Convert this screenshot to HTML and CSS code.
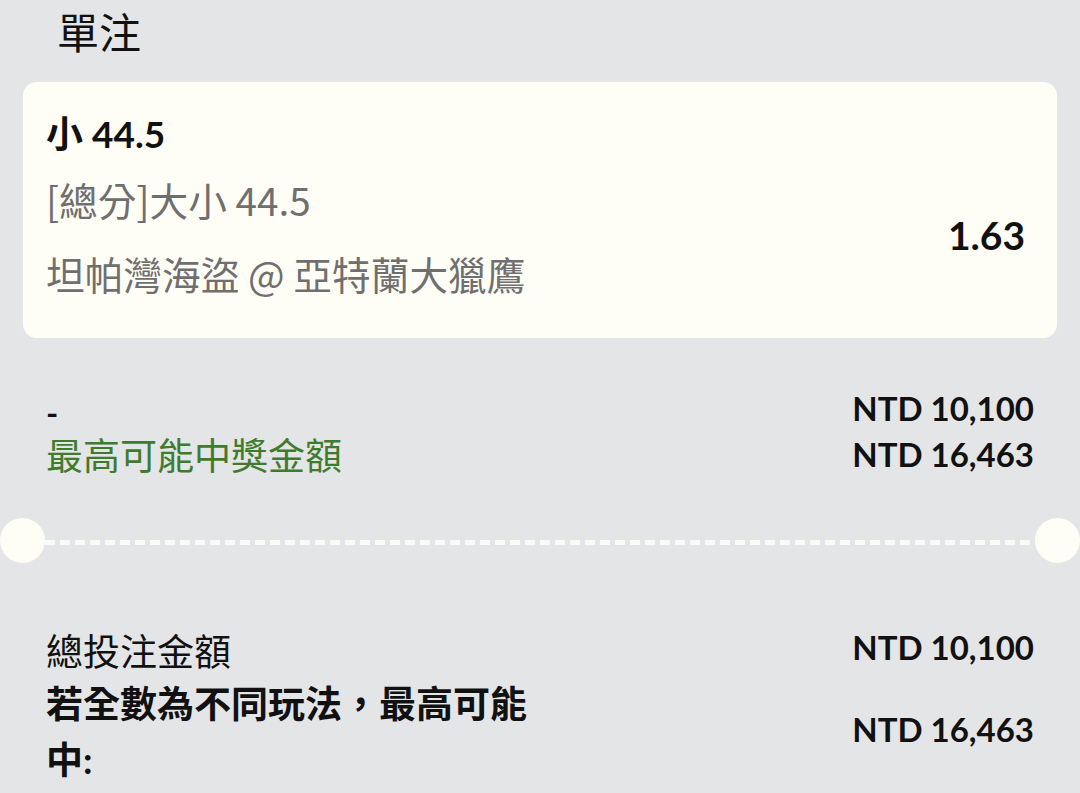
FILE: index.html
```html
<!DOCTYPE html>
<html lang="zh-Hant">
<head>
<meta charset="utf-8">
<title>單注</title>
<link rel="stylesheet" href="styles.css">
</head>
<body>
<div class="page">
  <div class="header">單注</div>
  <div class="card">
    <div class="sel">小 44.5</div>
    <div class="card-body">
      <div class="card-left">
        <div class="market">[總分]大小 44.5</div>
        <div class="event">坦帕灣海盜 @ 亞特蘭大獵鷹</div>
      </div>
      <div class="odds">1.63</div>
    </div>
  </div>
  <div class="summary">
    <div class="row">
      <div class="dash">-</div>
      <div class="amt">NTD 10,100</div>
    </div>
    <div class="row">
      <div class="green">最高可能中獎金額</div>
      <div class="amt">NTD 16,463</div>
    </div>
  </div>
  <div class="divider">
    <span class="notch"></span>
    <span class="line"></span>
    <span class="notch"></span>
  </div>
  <div class="totals">
    <div class="row">
      <div class="label">總投注金額</div>
      <div class="amt">NTD 10,100</div>
    </div>
    <div class="row row-wrap">
      <div class="label-bold">若全數為不同玩法，最高可能中:</div>
      <div class="amt">NTD 16,463</div>
    </div>
  </div>
</div>
</body>
</html>
```
FILE: styles.css
```css
html, body {
  margin: 0;
  padding: 0;
}
body {
  background: #e4e5e7;
  font-family: "Lato", "Noto Sans CJK TC", sans-serif;
  color: #111;
  width: 1080px;
  height: 793px;
  overflow: hidden;
}
.page {
  display: flex;
  flex-direction: column;
}
.header {
  height: 82px;
  line-height: 62px;
  font-size: 42px;
  padding-left: 57px;
  font-family: "Noto Sans CJK TC", sans-serif;
}
.card {
  margin: 0 23px;
  height: 256px;
  box-sizing: border-box;
  background: #fffef6;
  border-radius: 14px;
  padding: 18px 32px 0 23px;
}
.sel {
  font-size: 37px;
  font-weight: 700;
  line-height: 68px;
}
.card-body {
  display: flex;
  justify-content: space-between;
  align-items: center;
  margin-top: -3px;
}
.market,
.event {
  font-family: "Noto Sans CJK TC", sans-serif;
  font-size: 38.7px;
  line-height: 68px;
  color: #6f6f6f;
}
.event {
  margin-top: 6px;
}
.odds {
  font-size: 39px;
  font-weight: 700;
  margin-top: -3px;
}
.summary {
  padding: 50px 46px 0 46px;
}
.row {
  display: flex;
  justify-content: space-between;
  align-items: flex-start;
  line-height: 44px;
}
.amt {
  font-size: 33px;
  font-weight: 700;
  line-height: 40px;
}
.dash {
  font-size: 33px;
  font-weight: 700;
  padding-top: 2px;
}
.green {
  font-size: 37px;
  color: #3f7b2d;
}
.divider {
  margin-top: 40px;
  height: 45px;
  display: flex;
  align-items: center;
}
.notch {
  width: 45px;
  height: 45px;
  border-radius: 50%;
  background: #fffef6;
  flex: none;
}
.line {
  flex: 1;
  height: 5px;
  margin-top: 4px;
  background: repeating-linear-gradient(90deg, #fbfbf6 0 10px, transparent 10px 15px);
}
.totals {
  padding: 67px 46px 0 46px;
}
.totals .amt {
  line-height: 34px;
}
.label {
  font-size: 37px;
}
.row-wrap {
  margin-top: 2px;
  align-items: center;
}
.row-wrap .amt {
  margin-bottom: 6px;
}
.label-bold {
  font-size: 37px;
  font-weight: 700;
  line-height: 56px;
  width: 500px;
}
```
